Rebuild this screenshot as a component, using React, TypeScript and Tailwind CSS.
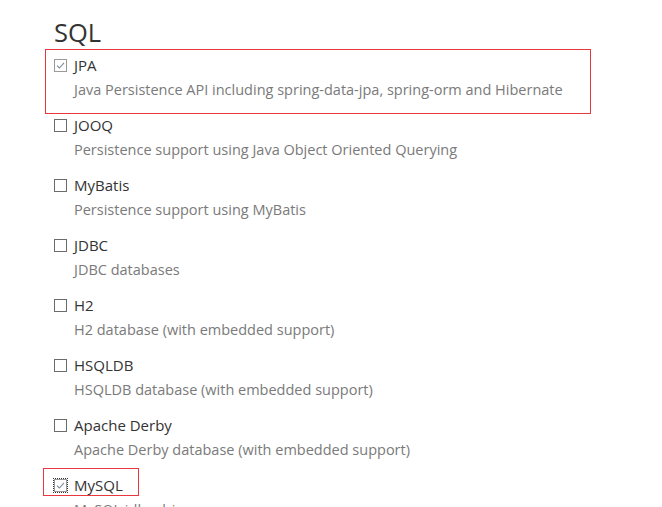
import React from 'react';

type Dep = { name: string; desc: string; checked?: boolean; box?: 'wide' | 'label' };

const deps: Dep[] = [
  { name: 'JPA', desc: 'Java Persistence API including spring-data-jpa, spring-orm and Hibernate', checked: true, box: 'wide' },
  { name: 'JOOQ', desc: 'Persistence support using Java Object Oriented Querying' },
  { name: 'MyBatis', desc: 'Persistence support using MyBatis' },
  { name: 'JDBC', desc: 'JDBC databases' },
  { name: 'H2', desc: 'H2 database (with embedded support)' },
  { name: 'HSQLDB', desc: 'HSQLDB database (with embedded support)' },
  { name: 'Apache Derby', desc: 'Apache Derby database (with embedded support)' },
  { name: 'MySQL', desc: 'MySQL jdbc driver', checked: true, box: 'label' },
];

const Checkbox = ({ checked, focused }: { checked?: boolean; focused?: boolean }) => (
  <span
    className={`relative flex w-[13px] h-[13px] shrink-0 items-center justify-center bg-white border ${
      checked ? 'border-[#9a9a9a]' : 'border-[#6b6b6b]'
    } ${focused ? 'outline-1 outline-dotted outline-[#333] outline-offset-0' : ''}`}
  >
    {checked && (
      <svg width="9" height="9" viewBox="0 0 9 9" fill="none">
        <path d="M1 4.6 L3.4 7 L8 1.8" stroke="#7c8a99" strokeWidth="1.1" />
      </svg>
    )}
  </span>
);

export default function App() {
  return (
    <div className="min-h-screen bg-white pl-[54px] pt-[17px]" style={{ fontFamily: '"Open Sans", "Noto Sans", sans-serif' }}>
      <h1 className="text-[25.5px] leading-[30px] text-[#333] mb-[8px]">SQL</h1>
      <ul>
        {deps.map((d) => (
          <li key={d.name} className="relative h-[60px]">
            {d.box === 'wide' && (
              <div className="absolute left-[-9px] top-[-6px] w-[546px] h-[65px] border border-[#e8383d] pointer-events-none" />
            )}
            {d.box === 'label' && (
              <div className="absolute left-[-11px] top-[-7px] w-[96px] h-[28px] border border-[#e8383d] pointer-events-none" />
            )}
            <label className="flex items-center gap-[7px] h-[20px] text-[15px] text-[#333]">
              <Checkbox checked={d.checked} focused={d.box === 'label'} />
              <span>{d.name}</span>
            </label>
            <p className="ml-[20px] mt-[5px] h-[20px] leading-[20px] text-[14.5px] text-[#7a7a7a]">{d.desc}</p>
          </li>
        ))}
      </ul>
    </div>
  );
}
